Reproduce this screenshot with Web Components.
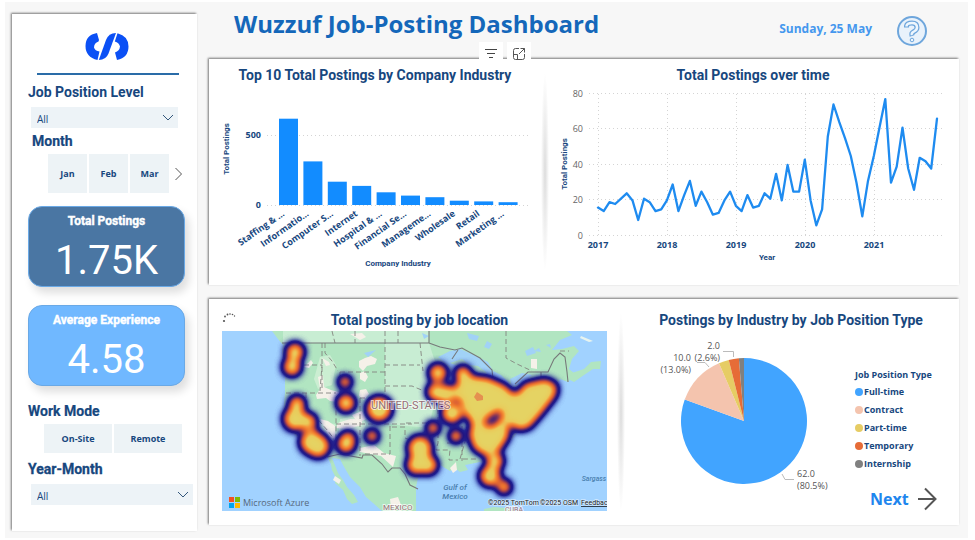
<!DOCTYPE html>
<html lang="en">
<head>
<meta charset="utf-8">
<title>Wuzzuf Job-Posting Dashboard</title>
<style>
  body { margin: 0; background: #fff; font-family: "Open Sans", "Noto Sans", sans-serif; color: #17477e; }
</style>
</head>
<body>
<wz-dashboard>
  <wz-sidebar slot="side">
    <wz-select label="Job Position Level" style="--inset: 18px"></wz-select>
    <wz-tiles label="Month" items="Jan,Feb,Mar" more class="month"></wz-tiles>
    <wz-kpi label="Total Postings" value="1.75K" style="--fill: #4a76a3"></wz-kpi>
    <wz-kpi label="Average Experience" value="4.58" style="--fill: #70b8ff"></wz-kpi>
    <wz-tiles label="Work Mode" items="On-Site,Remote" class="mode"></wz-tiles>
    <wz-select label="Year-Month" style="--inset: 3px" heavy></wz-select>
  </wz-sidebar>
  <wz-header heading="Wuzzuf Job-Posting Dashboard" date="Sunday, 25 May"></wz-header>
  <wz-panel style="--cols: minmax(0,332fr) minmax(0,412fr)">
    <wz-card heading="Top 10 Total Postings by Company Industry">
      <wz-toolbar slot="tools"></wz-toolbar>
      <wz-bar-chart></wz-bar-chart>
    </wz-card>
    <wz-card heading="Total Postings over time">
      <wz-line-chart></wz-line-chart>
    </wz-card>
  </wz-panel>
  <wz-panel style="--top: 11px; --cols: minmax(0,408fr) minmax(0,336fr)">
    <wz-card heading="Total posting by job location" style="--left: 13px">
      <wz-spinner slot="tools"></wz-spinner>
      <wz-heat-map></wz-heat-map>
    </wz-card>
    <wz-card heading="Postings by Industry by Job Position Type">
      <wz-pie-chart></wz-pie-chart>
    </wz-card>
  </wz-panel>
</wz-dashboard>

<script>
const BASE = `:host,*{box-sizing:border-box} svg{display:block} h1,h2,h3,p,ul{margin:0;padding:0;font-weight:inherit}
button,select{font:inherit;color:inherit;border:0;margin:0;padding:0;background:none}
.din{font-family:Roboto,"Liberation Sans",sans-serif}
.b{font-weight:700}`;

function define(name, render) {
  customElements.define(name, class extends HTMLElement {
    constructor() { super(); this.attachShadow({ mode: "open" }); }
    connectedCallback() {
      const { css, html } = render(this);
      this.shadowRoot.innerHTML = `<style>${BASE}${css}</style>${html}`;
    }
  });
}

define("wz-dashboard", () => ({
  css: `:host{display:grid;grid-template-columns:185px minmax(0,1fr);column-gap:12px;
      margin:2px 7px 0 5px;padding:0 9px 13px 7px;background:#f7f7f7}
    aside{padding-top:12px;margin-bottom:-6px;display:grid}
    main{display:flex;flex-direction:column}
    ::slotted(wz-panel:last-child){margin-top:14px}`,
  html: `<aside><slot name="side"></slot></aside><main><slot></slot></main>`
}));

define("wz-sidebar", () => ({
  css: `:host{display:flex;flex-direction:column;background:#fff;padding:0 12px 24px 16px;
      box-shadow:-1px -1px 2px #777}
    .logo{align-self:center;margin:18px 0 0 1px}
    hr{width:142px;height:2px;border:0;background:#2a6ca8;margin:11px 0 8px 9px}
    ::slotted(wz-kpi){margin-bottom:18px}
    ::slotted(.month){margin:3px 0 13px 4px;--start:16px;--tile-w:39px;--tile-h:39px;--gap:2px;--title:21px}
    ::slotted(.mode){margin:-3px 0 7px;--start:16px;--tile-w:68px;--tile-h:29px;--gap:2px;--title:21px}`,
  html: `<svg class="logo" width="44" height="30" viewBox="0 0 44 30" role="img" aria-label="Wuzzuf">
      <g fill="#0b50f5"><path d="M12 1 Q0.500 3 0.500 14 Q0.500 25 12.500 28 L14.500 19.500 Q10 19 9 15.500 Q9 11 13.500 9.500 L14 8Z"/>
      <path d="M13.800 28 L21 8 Q23.500 1.200 31 1 L23.500 21.500 Q21 28 13.800 28Z"/>
      <path d="M32.500 1.200 Q43.500 4 43.500 14.500 Q43.500 25.500 32 28 L30 20.500 Q34.500 19 35 14.500 Q34 10.500 29.800 9.500Z"/></g></svg>
    <hr><slot></slot>`
}));

define("wz-select", el => ({
  css: `:host{display:block}
    label{display:block;font-size:14px;line-height:18px;${el.hasAttribute("heavy") ? "-webkit-text-stroke:.3px" : ""}}
    .box{display:block;position:relative;margin:6px 0 0 3px;width:calc(100% + 8px - var(--inset));background:#edf3f7}
    select{appearance:none;display:block;width:100%;height:21px;padding:4px 6px 0;font-size:10px;line-height:17px}
    svg{position:absolute;right:4px;top:7px;pointer-events:none}`,
  html: `<label class="din b" for="s">${el.getAttribute("label")}</label>
    <span class="box"><select id="s"><option>All</option></select>
    <svg width="12" height="8" viewBox="0 0 12 8" fill="none" stroke="#33577c"><path d="M1 1l5 5 5-5"/></svg></span>`
}));

define("wz-tiles", el => ({
  css: `:host{display:block}
    h3{font-size:14px;line-height:var(--title);-webkit-text-stroke:.2px}
    .row{display:flex;gap:var(--gap);margin:2px 0 0 var(--start);align-items:center}
    .tile{width:var(--tile-w);height:var(--tile-h);background:#edf3f6;font-size:9px}
    .more{margin-left:3px}`,
  html: `<h3 class="din b">${el.getAttribute("label")}</h3><div class="row">
    ${el.getAttribute("items").split(",").map(t => `<button class="tile b">${t}</button>`).join("")}
    ${el.hasAttribute("more") ? `<button class="more" aria-label="More"><svg width="9" height="14" viewBox="0 0 9 14" fill="none" stroke="#555"><path d="M1.500 1l6 6-6 6"/></svg></button>` : ""}</div>`
}));

define("wz-kpi", el => ({
  css: `:host{display:block;width:157px;height:81px;border-radius:14px;background:var(--fill);border:1px solid #6aa9e6;
      color:#fff;text-align:center;box-shadow:4px 6px 9px rgba(0,0,0,.13)}
    h3{font-size:12px;line-height:16px;margin-top:6px;-webkit-text-stroke:.4px}
    p{font-size:40px;line-height:46px;margin-top:9px}`,
  html: `<h3 class="din b">${el.getAttribute("label")}</h3><p class="din">${el.getAttribute("value")}</p>`
}));

define("wz-header", el => ({
  css: `:host{display:flex;align-items:center;height:57px;padding:0 32px 0 25px}
    h1{align-self:flex-start;font-size:24px;line-height:44px;color:#1467ba;white-space:nowrap}
    time{margin-left:auto;font-size:12px;line-height:20px;margin-bottom:4px;color:#4597ee;white-space:nowrap}
    button{margin-left:25px}`,
  html: `<h1 class="b">${el.getAttribute("heading")}</h1><time class="b">${el.getAttribute("date")}</time>
    <button aria-label="Help"><svg width="30" height="30" viewBox="0 0 30 30" fill="none" stroke-linejoin="round">
    <circle cx="15" cy="15" r="14" fill="#e9f2fb" stroke="#6ea6dc" stroke-width="2"/>
    <path d="M9.500 11.500V10Q10 7 15 7T20 11.500Q20 14 17 15.500T15 20" stroke="#6ea6dc" stroke-width="5"/>
    <path d="M9.500 10.500V10Q10 7 15 7T20 11.500Q20 14 17 15.500T15 19" stroke="#eef6fd" stroke-width="2.500"/>
    <circle cx="15" cy="24" r="1.800" fill="#eef6fd" stroke="#6ea6dc"/></svg></button>`
}));

define("wz-panel", () => ({
  css: `:host{display:grid;grid-template-columns:var(--cols);gap:6px;background:#fff;box-shadow:-1px -1px 2px #777}
    ::slotted(wz-card:last-child){--divider:block}`,
  html: `<slot></slot>`
}));

define("wz-card", el => ({
  css: `:host{display:block;position:relative;padding:var(--top,6px) 0 0 var(--left,0px)}
    :host::before{content:"";display:var(--divider,none);position:absolute;left:-6px;top:14px;bottom:14px;width:8px;
      background:radial-gradient(closest-side,#dcdcdc,#f1f1f1 60%,#fff)}
    h2{font-size:14px;line-height:21px;text-align:center;white-space:nowrap}`,
  html: `<slot name="tools"></slot><h2 class="din b">${el.getAttribute("heading")}</h2><slot></slot>`
}));

define("wz-toolbar", () => ({
  css: `:host{position:absolute;right:10px;top:-17px;display:flex;gap:4px}
    button{width:24px;height:24px;background:#fff;display:grid;place-items:center}`,
  html: `<button aria-label="Filters"><svg width="14" height="12" viewBox="0 0 14 12" stroke="#444"><path d="M1 1.500h12M3 5.500h8M5 9.500h4"/></svg></button>
    <button aria-label="Focus mode"><svg width="14" height="14" viewBox="0 0 14 14" fill="none" stroke="#555"><path d="M7 1.500H3.500A2 2 0 0 0 1.500 3.500V10.500A2 2 0 0 0 3.500 12.500H10.500A2 2 0 0 0 12.500 10.500V7M8.500 1.500H12.500V5.500M12.500 1.500L7 7M1.500 7.500H5.500V12.500"/></svg></button>`
}));

define("wz-spinner", () => ({
  css: `:host{position:absolute;left:13px;top:13px}`,
  html: `<svg width="16" height="12" viewBox="0 0 16 12" fill="#555"><circle cx="2" cy="9" r="1.100"/><circle cx="3" cy="4.500" r=".9"/><circle cx="5.500" cy="2.500" r=".9"/><circle cx="8" cy="2" r=".8"/><circle cx="10.500" cy="2.500" r=".8"/><circle cx="12.500" cy="4" r=".7"/></svg>`
}));

const CHART = `:host{display:block} svg{width:100%;height:auto}
  text{fill:#17477e;font-size:9px} .grid{stroke:#d4d4d4;stroke-dasharray:1 3;fill:none} .mid{text-anchor:middle} .end{text-anchor:end}
  .axis{font-size:8px;font-weight:700;font-family:Roboto,sans-serif}`;

define("wz-bar-chart", () => {
  const data = [["Staffing & …", 623], ["Informatio…", 315], ["Computer S…", 168], ["Internet", 138], ["Hospital & …", 92],
    ["Financial Se…", 68], ["Manageme…", 56], ["Wholesale", 31], ["Retail", 26], ["Marketing …", 20]];
  const zero = 119, step = 24.4;
  const bars = data.map(([name, v], i) => {
    const x = 70 + i * step, h = v * 0.1385;
    return `<rect x="${x.toFixed(1)}" y="${(zero - h).toFixed(1)}" width="19" height="${h.toFixed(1)}" fill="#128cff"/>
      <text class="end b" transform="translate(${(x + 6).toFixed(1)} 129) rotate(-35)">${name.replace("&", "&amp;")}</text>`;
  }).join("");
  return { css: CHART, html: `<svg viewBox="0 0 332 199" role="img" aria-label="Postings by company industry">
    <path class="grid" d="M58 49.500H320M58 119.500H320"/>
    <text class="end b" x="52" y="52">500</text><text class="end b" x="52" y="122">0</text>
    <text class="axis mid" transform="translate(20 63) rotate(-90)">Total Postings</text>
    ${bars}<text class="axis mid" x="189" y="180">Company Industry</text></svg>` };
});

define("wz-line-chart", () => {
  const v = [16,14,19,18,21,24,20,9,21,19,14,15, 20,29,14,23,31,17,25,19,12,13,20,25, 17,14,23,16,17,24,21,35,20,40,25,25,
    43,20,6,15,56,74,64,55,45,30,11,31, 45,61,77,30,39,61,38,26,44,42,38,66];
  const X = i => 51 + i * 5.745, Y = n => 150 - n * 1.7775;
  const rows = [0, 20, 40, 60, 80].map(n => `<path class="grid" d="M42 ${Math.round(Y(n)) - .5}H397"/><text class="end tick" x="36" y="${Math.round(Y(n)) + 3}">${n}</text>`).join("");
  const cols = [0, 1, 2, 3, 4].map(n => `<path class="grid" d="M${Math.round(X(n * 12)) + .5} 8V150"/><text class="mid b year" x="${Math.round(X(n * 12))}" y="162">${2017 + n}</text>`).join("");
  return { css: CHART + `.tick{fill:#666} polyline{fill:none;stroke:#1e8bf0;stroke-width:2.300;stroke-linejoin:round;stroke-linecap:round}`,
    html: `<svg viewBox="0 0 412 199" role="img" aria-label="Total postings over time">${rows}${cols}
    <polyline points="${v.map((n, i) => X(i).toFixed(1) + "," + Y(n).toFixed(1)).join(" ")}"/>
    <text class="axis mid" transform="translate(20 78) rotate(-90)">Total Postings</text>
    <text class="axis mid" x="220" y="174">Year</text></svg>` };
});

define("wz-heat-map", () => {
  const ramp = [[30,30,150,0],[30,30,150,.5],[26,22,140,.95],[32,20,130,1],[85,38,112,1],[150,60,82,1],[210,88,55,1],[238,118,46,1],[244,150,58,1],[234,202,90,1],[230,212,100,1]];
  const table = c => ramp.map(r => c === 3 ? r[3] : (r[c] / 255).toFixed(2)).join(" ");
  const spots = [[73,21,8.5],[70,36,8.5],[123,51,5.8],[124,72,8.5],[157,78,12],[150,105,5.8],[75,73,7.5],[73,88,11],[86,91,8],[90,111,11.5],[96,115,11],
    [124,113,8.5],[126,108,7],[216,42,8.5],[214,61,8.5],[223,63,9],[230,82,10],[211,97,5.8],[234,105,6],[198,117,11.5],[194,134,9],[206,134,9],
    [241,43,7.5],[273,130,8],[268,145,10],[282,156,6.5]];
  return { css: `:host{display:block;margin-right:10px;padding-bottom:14px} svg{width:100%;height:auto} text{font-family:Roboto,sans-serif}
      .state{fill:none;stroke:#83857f;stroke-width:.9;stroke-dasharray:5 3} .nation{fill:none;stroke:#77797a;stroke-width:1.1}
      .sea{font-size:8px;font-style:italic;font-weight:500;fill:#4a7fae;text-anchor:middle}
      .land{fill:#966f76;stroke:#fff;stroke-width:2;stroke-opacity:.7;paint-order:stroke} a{text-decoration:underline}
      .credit{font-size:7px;fill:#222;stroke:#fff;stroke-width:1.500;stroke-opacity:.5;paint-order:stroke}`,
    html: `<svg viewBox="0 0 385 180" role="img" aria-label="Map of job locations">
    <defs><filter id="heat" x="0" y="0" width="385" height="180" filterUnits="userSpaceOnUse" color-interpolation-filters="sRGB">
      <feGaussianBlur stdDeviation="4.200"/><feColorMatrix values="0 0 0 1 0 0 0 0 1 0 0 0 0 1 0 0 0 0 1 0"/>
      <feComponentTransfer><feFuncR type="table" tableValues="${table(0)}"/><feFuncG type="table" tableValues="${table(1)}"/><feFuncB type="table" tableValues="${table(2)}"/><feFuncA type="table" tableValues="${table(3)}"/></feComponentTransfer></filter></defs>
    <rect width="385" height="180" fill="#a1d2ff"/>
    <path fill="#b1e5c1" d="M50 0L56 8 61 14 60 20 63 40 63 62 61 82 68 99 78 109 88 122 105 126 109 133 110 139 114 147 113 152 121 159 125 168 130 173 136 171 132 164 125 156 121 149 116 142 112 132 110 127 118 128 121 134 128 146 138 156 144 166 151 172 160 180H194V156L196 147 204 142 211 139 218 134 228 140 233 137 238 141 246 139 243 134 258 131 265 136 266 149 275 159 281 162 284 156 279 138 278 129 281 119 295 102 308 95 303 84 311 69 331 59 338 48 346 51 353 43 347 38 350 28 357 20 352 15 340 18 330 19 338 9 350 4 345 0Z"/>
    <path fill="#b1e5c1" d="M346 48L350 42 362 38 369 31 379 30 378 38 371 38 362 44 352 51Z"/>
    <path fill="#c8edd3" d="M61 0H207V12H61Z"/>
    <path fill="#c8edd3" d="M163 12H207L216 40 214 64 208 92 200 96 182 95 163 92Z"/>
    <path fill="#cbeed2" d="M98 26l10-2 6 10-4 20-14 4-4-10zM94 90l19 3 4 14 4 10-14-2-9-12zM118 88l22-4 4 10-8 14-12 10-8-8z"/>
    <path fill="#f5f1e9" d="M82 36l4-4 3-3 2 3-4 5zM100 27l7 4 1 3-4 1zM96 46l5-2 1 12 7 3 11 3 2 5-6 4-8-1-4-3-9 1-1-4 4-6zM137 30l6-3 6-2 6 3-2 5-8 2-4 5-4-4zM138 42l5-2 3 6-3 5-5-3zM128 3l12-1 4 4-6 3zM138 59l6-1 3 5-5 6-5-4zM98 88l8 2 7 5 0 14-6-4zM116 92l12-4 12 0 0 6-14 4-12-1zM130 84l10-4 4 8-8 4zM138 117l14-3 10 8 12 3-3 11-12-11-21-4zM168 168l8-2 3 8-10 3zM113 145l6 4-2 4-6-4zM309 28l6 0v10l-6-1zM228 137l6-6 1 8-4 3z"/>
    <path fill="#a1d2f7" d="M216 26l12-6 10-2 14 6 14 7 5 9 8 4 8 8-10 3-10-5-8-6-14-4-10 1zM288 48l12-6 10 2-8 7-12 4zM303 20l8-4 3 6-9 3zM245 2l12 3-2 5-8-2zM265 10l5 3-3 5-5-2zM142 22l12-3-8 7zM200 2l7 3-5 3zM312 20l5-3 2 4zM324 14l4-1 1 4z"/>
    <path fill="#b1e5c1" d="M228 32l12-4 8 6 8 1 8 6 5 9-10 3-8-12-10-4zM262 178l10-2 12 1 14 4H262z"/>
    <path fill="#e8f4ef" d="M359 5l12 5-4 1-9-4z"/>
    <path class="state" d="M100 12V60M103 12V22L110 30 116 40M82 34H100L98 60M64 62H114M84 62V75L106 100 112 108M118 41V62L114 66V112L110 118M118 41H163M163 0V92M163 34H198M163 55H190L202 60M138 67H163M138 67V125M114 93H190M168 95V123H140M170 96H183V107L206 116M184 92H206M198 12L201 40M216 70V112L214 119H228L227 129H236M215 80H240M240 95V130M225 112H240M246 100L238 128H256M284 0L284 27 295 33 310 40M110 0L113 12M133 0V12M176 0V12M338 20H347"/>
    <path class="nation" d="M60 12H207V0M207 12L218 16 233 19 240 17 258 27 270 39 271 48M230 28L236 19M293 53L306 41H326L332 28 338 22 343 26 345 41 346 51M319 41V50M105 126L118 123 140 127 141 124H150L160 133 166 141 170 137 178 137 183 143 188 154 196 158"/>
    <g filter="url(#heat)"><g>${spots.map(([x, y, r]) => `<circle cx="${x}" cy="${y}" r="${r}"/>`).join("")}
      <path d="M235 52L239 40 247 45 266 47 284 55 291 63 297 61 302 53 324 48 335 54 334 64 320 82 307 97 296 99 289 94 286 93 287 105 278 119 264 125 252 118 247 104 250 92 242 82 238 70ZM261 92L266 85 277 79 281 83 276 91 267 96Z" fill-rule="evenodd"/><path d="M222 56H240V68H222Z"/>
      <path d="M264 90L276 82" stroke="#000" stroke-width="6" stroke-opacity=".3"/></g></g>
    <path d="M252 66l3-5 6 4 0 4-6 1z" fill="#e5844c" opacity=".85"/>
    <text class="land" x="149" y="78" font-size="11">UNITED-STATES</text>
    <text class="sea" x="233" y="159">Gulf of</text><text class="sea" x="233" y="168">Mexico</text>
    <text class="sea" x="372" y="150" style="font-size:7px">Sargass</text>
    <text class="land" x="161" y="179" font-size="8">MEXICO</text><text class="land" x="283" y="181" font-size="7">CUBA</text>
    <text class="credit" x="266" y="174">©2025 TomTom</text><text class="credit" x="318" y="174">©2025 OSM</text>
    <a href="#feedback"><text class="credit" x="359" y="174">Feedbac</text></a>
    <path fill="#f25022" d="M7 166h5v5H7z"/><path fill="#7fba00" d="M13 166h5v5h-5z"/><path fill="#00a4ef" d="M7 172h5v5H7z"/><path fill="#ffb900" d="M13 172h5v5h-5z"/>
    <text x="21" y="175" fill="#56697c" style="font:9px 'Open Sans',sans-serif">Microsoft Azure</text></svg>` };
});

define("wz-pie-chart", () => {
  const data = [["Full-time", 62, "#41a4ff"], ["Contract", 10, "#f4c4ae"], ["Part-time", 2, "#e6cc64"], ["Temporary", 2, "#e66c37"], ["Internship", 1, "#808080"]];
  const cx = 121, cy = 90, r = 63;
  let sum = 0;
  const at = n => { const a = n / 77 * 2 * Math.PI; return `${(cx + r * Math.sin(a)).toFixed(2)} ${(cy - r * Math.cos(a)).toFixed(2)}`; };
  const slices = data.map(([, n, c]) => { const s = at(sum); sum += n; return `<path fill="${c}" d="M${cx} ${cy}L${s}A${r} ${r} 0 ${n > 38 ? 1 : 0} 1 ${at(sum)}Z"/>`; }).join("");
  return { css: CHART + `:host{display:grid;grid-template-columns:minmax(0,227fr) minmax(0,109fr);align-items:start}
      .side{padding:36px 0 0 5px;font-size:9px}
      h3{font-size:9px;line-height:16px;white-space:nowrap} ul{list-style:none} li{display:flex;align-items:center;gap:1px;line-height:18px}
      i{width:8px;height:8px;border-radius:50%}
      text{fill:#555;font-size:9px} .lead{fill:none;stroke:#bbb}
      a{display:flex;align-items:center;justify-content:space-between;margin:6px 22px 0 15px;line-height:40px;font-size:16px;color:#1e86ee;text-decoration:none}
      a svg{width:19px;height:24px}`,
    html: `<svg viewBox="0 0 227 194" role="img" aria-label="Postings by position type">${slices}
      <path class="lead" d="M100 20.500H110.500V26M74 31.500H82L86 36M159 143L162 148.500H171"/>
      <text class="end" x="97" y="18">2.0</text><text class="end" x="97" y="30">(2.6%)</text>
      <text class="end" x="68" y="30">10.0</text><text class="end" x="68" y="42">(13.0%)</text>
      <text x="174" y="146">62.0</text><text x="174" y="158">(80.5%)</text></svg>
    <div class="side"><h3 class="b">Job Position Type</h3><ul>${data.map(([n,, c]) => `<li class="b"><i style="background:${c}"></i>${n}</li>`).join("")}</ul>
      <a class="b" href="#next">Next <svg viewBox="0 0 19 24" fill="none" stroke="#555" stroke-width="2"><path d="M0 12H17.500M7 1.500L17.500 12 7 22.500"/></svg></a></div>` };
});
</script>
</body>
</html>
